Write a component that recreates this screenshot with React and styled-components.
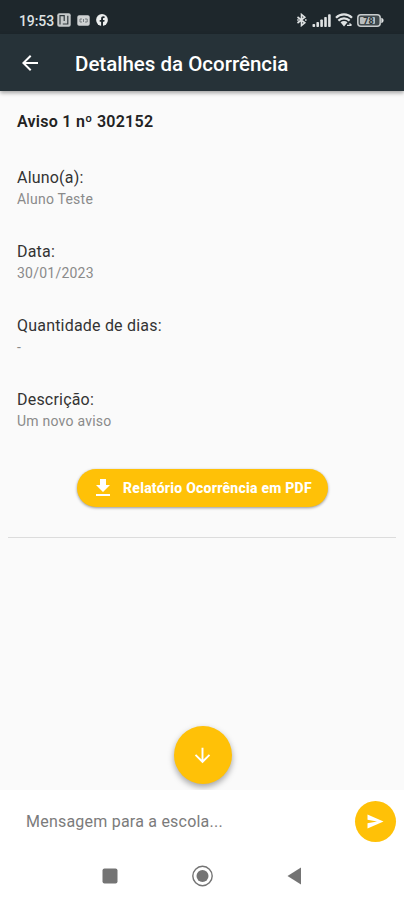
import React from "react";
import styled, { createGlobalStyle } from "styled-components";
import {
  MdArrowBack,
  MdArrowDownward,
  MdFileDownload,
} from "react-icons/md";

const GlobalStyle = createGlobalStyle`
  :root {
    --amber: #ffc107;
    --bar: #263238;
    --status: #1e272c;
    --page: #fafafa;
    --ink: #333;
    --muted: #8a8a8a;
  }

  * {
    box-sizing: border-box;
  }

  body {
    margin: 0;
    font-family: Roboto, "Liberation Sans", sans-serif;
    background-color: #fff;
  }

  h1, h2, h3, p {
    margin: 0;
  }

  svg {
    display: block;
    flex-shrink: 0;
  }

  button {
    border: 0;
    padding: 0;
    font-family: inherit;
    color: #fff;
  }
`;

const Screen = styled.div`
  display: flex;
  flex-direction: column;
  width: 404px;
  height: 900px;
  overflow: hidden;
  background-color: var(--page);
`;
// =============================================

const StatusBar = styled.div`
  display: flex;
  justify-content: space-between;
  height: 34px;
  padding: 6px 20px 0 19px;
  background-color: var(--status);
  color: #dfe2e3;
`;

const StatusGroup = styled.div`
  display: flex;
  align-items: center;
  gap: ${({ $gap }) => $gap};
`;

const Clock = styled.span`
  margin-right: -3px;
  padding-top: 1px;
  font-size: 14px;
  font-weight: 500;
  letter-spacing: -0.1px;
`;
// =============================================

const AppBar = styled.header`
  display: flex;
  align-items: center;
  gap: 33px;
  height: 57px;
  padding-left: 18px;
  background-color: var(--bar);
  color: #fff;
  box-shadow: 0 2px 4px rgba(0, 0, 0, 0.35);
`;

const BackButton = styled.button`
  background: none;
`;

const Title = styled.h1`
  font-size: 20.5px;
  font-weight: 500;
  line-height: 24px;
  padding-top: 2px;
`;
// =============================================

const Content = styled.main`
  flex: 1;
  display: flex;
  flex-direction: column;
  padding: 21px 8px 0;
`;

const Heading = styled.h2`
  margin: 0 9px 36px;
  color: #222;
  font-size: 16px;
  font-weight: 600;
  line-height: 20px;
  letter-spacing: 0.26px;
`;

const Field = styled.div`
  height: 74px;
  padding: 0 9px;
`;

const Label = styled.h3`
  color: var(--ink);
  font-size: 16px;
  font-weight: 400;
  line-height: 20px;
  letter-spacing: 0.2px;
`;

const Value = styled.p`
  margin-top: 2px;
  color: var(--muted);
  font-size: 14px;
  line-height: 18px;
  letter-spacing: 0.23px;
`;

const ReportButton = styled.button`
  display: flex;
  align-items: center;
  align-self: center;
  gap: 8px;
  width: 251px;
  height: 38px;
  margin: 5px 0 30px 1px;
  padding-left: 14px;
  border-radius: 19px;
  background-color: var(--amber);
  box-shadow: 0 1px 3px rgba(0, 0, 0, 0.4);
  font-size: 14px;
  font-weight: 800;
  letter-spacing: 0.24px;
  white-space: nowrap;
`;

const Divider = styled.hr`
  width: 100%;
  height: 1px;
  margin: 0;
  border: 0;
  background-color: #dcdcdc;
`;

const ScrollButton = styled.button`
  display: flex;
  align-items: center;
  justify-content: center;
  align-self: center;
  width: 58px;
  height: 58px;
  margin: auto 0 6px 1px;
  border-radius: 50%;
  background-color: var(--amber);
  box-shadow: 0 3px 6px rgba(0, 0, 0, 0.35);
`;
// =============================================

const Composer = styled.form`
  display: flex;
  align-items: center;
  justify-content: space-between;
  height: 62px;
  padding: 0 8px 0 26px;
  background-color: #fff;
`;

const Placeholder = styled.span`
  padding-top: 1px;
  color: #7b7b7b;
  font-size: 16px;
  letter-spacing: 0.22px;
`;

const SendButton = styled.button`
  display: flex;
  align-items: center;
  justify-content: center;
  width: 41px;
  height: 41px;
  border-radius: 50%;
  background-color: var(--amber);
`;

const NavBar = styled.nav`
  display: flex;
  justify-content: space-between;
  align-items: center;
  height: 48px;
  padding: 0 102px 1px;
  background-color: #fff;
  color: #747474;
`;
// =============================================

const NfcIcon = () => (
  <svg width="14" height="14" viewBox="0 0 14 14" fill="none">
    <rect x="0.3" y="0.3" width="13.4" height="13.4" rx="2" fill="#c5c9ca" />
    <path d="M3 11.5V2.7h4.2V8M5.8 11h5V2.7" stroke="#30393d" strokeWidth="1.2" />
  </svg>
);

const CardIcon = () => (
  <svg width="13" height="11" viewBox="0 0 13 11" fill="none">
    <rect x="0.3" y="0.3" width="12.4" height="10.4" rx="1.8" fill="#cfd2d3" />
    <path d="M5 4H3v3h2M6.5 4v3M8 4h2.2v3H8" stroke="#747b7e" />
  </svg>
);

const FacebookIcon = () => (
  <svg width="12" height="12" viewBox="0 0 12 12">
    <circle cx="6" cy="6" r="5.9" fill="#eceeee" />
    <path d="M5.1 12V7.7H3.7V5.9h1.4V4.7c0-1.6.9-2.4 2.3-2.4l1.2.1v1.5h-.7c-.7 0-.9.4-.9.9v1.1h1.6l-.3 1.8H7V12z" fill="#1e272c" />
  </svg>
);

const BluetoothIcon = () => (
  <svg width="12" height="14" viewBox="0 0 12 14" fill="none" stroke="currentColor" strokeWidth="1.6">
    <path d="M1.5 4L8.8 9.800L5.500 12.500V1.500L8.800 4.200L1.500 10" />
    <path d="M1.200 7h1.600M9 7h1.600" />
  </svg>
);

const SignalIcon = () => (
  <svg width="19" height="13" viewBox="0 0 19 13" fill="currentColor">
    <rect x="0.5" y="10" width="2.6" height="3" rx="0.8" />
    <rect x="4.4" y="8" width="2.6" height="5" rx="0.8" />
    <rect x="8.3" y="5.5" width="2.6" height="7.5" rx="0.8" />
    <rect x="12.2" y="3" width="2.6" height="10" rx="0.8" />
    <rect x="16.1" y="0.3" width="2.6" height="12.7" rx="0.8" />
  </svg>
);

const WifiIcon = () => (
  <svg width="18" height="14" viewBox="0 0 18 14" fill="none" stroke="currentColor" strokeWidth="2.2">
    <path d="M1 4.7C5.5.2 12.5.2 17 4.7M3.4 7.6c3.2-3 8-3 11.2 0" />
    <path d="M5.5 9.3c2-1.8 5-1.8 7 0L9 13.5z" fill="currentColor" stroke="none" />
    <path d="M12 12.4h4.5M14.5 10.4l2 1.8" strokeWidth="1.3" />
  </svg>
);

const BatteryIcon = () => (
  <svg width="27" height="13" viewBox="0 0 27 13">
    <rect x="0.8" y="0.8" width="22.4" height="11.4" rx="3" fill="#40494d" stroke="#c8cccd" strokeWidth="1.5" />
    <rect x="3" y="3" width="15" height="7" rx="1" fill="#b9bebf" />
    <path d="M24.3 3.8c1.5.5 2.3 1.5 2.3 2.7s-.8 2.2-2.3 2.7z" fill="#dfe2e3" />
    <text x="11.5" y="9.7" textAnchor="middle" fontSize="9" fontWeight="700" fill="#2d363a">78</text>
  </svg>
);

const SendIcon = () => (
  <svg width="17" height="15" viewBox="0 0 17 15">
    <path d="M0.5 0.5L16.5 7.5L0.5 14.5V9.3L10 7.5L0.5 5.7z" fill="currentColor" />
  </svg>
);

const SquareIcon = () => (
  <svg width="16" height="16" viewBox="0 0 16 16">
    <rect x="0.5" y="0.5" width="15" height="15" rx="2" fill="currentColor" />
  </svg>
);

const HomeIcon = () => (
  <svg width="22" height="22" viewBox="0 0 22 22">
    <circle cx="10.5" cy="11" r="9.7" fill="none" stroke="currentColor" strokeWidth="1.4" />
    <circle cx="10.5" cy="11" r="6" fill="currentColor" />
  </svg>
);

const TriangleIcon = () => (
  <svg width="15" height="18" viewBox="0 0 15 18">
    <path d="M0.5 9L14 0.5v17z" fill="currentColor" />
  </svg>
);
// =============================================

const fields = [
  { label: "Aluno(a):", value: "Aluno Teste" },
  { label: "Data:", value: "30/01/2023" },
  { label: "Quantidade de dias:", value: "-" },
  { label: "Descrição:", value: "Um novo aviso" },
];

const App = () => {
  return (
    <Screen>
      <GlobalStyle />
      <StatusBar>
        <StatusGroup $gap="6px">
          <Clock>19:53</Clock>
          <NfcIcon />
          <CardIcon />
          <FacebookIcon />
        </StatusGroup>
        <StatusGroup $gap="4px">
          <BluetoothIcon />
          <SignalIcon />
          <WifiIcon />
          <BatteryIcon />
        </StatusGroup>
      </StatusBar>

      <AppBar>
        <BackButton type="button" aria-label="Voltar">
          <MdArrowBack size={24} />
        </BackButton>
        <Title>Detalhes da Ocorrência</Title>
      </AppBar>

      <Content>
        <Heading>Aviso 1 nº 302152</Heading>
        {fields.map(({ label, value }) => (
          <Field key={label}>
            <Label>{label}</Label>
            <Value>{value}</Value>
          </Field>
        ))}
        <ReportButton type="button">
          <MdFileDownload size={24} />
          Relatório Ocorrência em PDF
        </ReportButton>
        <Divider />
        <ScrollButton type="button" aria-label="Descer">
          <MdArrowDownward size={23} />
        </ScrollButton>
      </Content>

      <Composer>
        <Placeholder>Mensagem para a escola...</Placeholder>
        <SendButton type="button" aria-label="Enviar">
          <SendIcon />
        </SendButton>
      </Composer>

      <NavBar>
        <SquareIcon />
        <HomeIcon />
        <TriangleIcon />
      </NavBar>
    </Screen>
  );
};

export default App;
